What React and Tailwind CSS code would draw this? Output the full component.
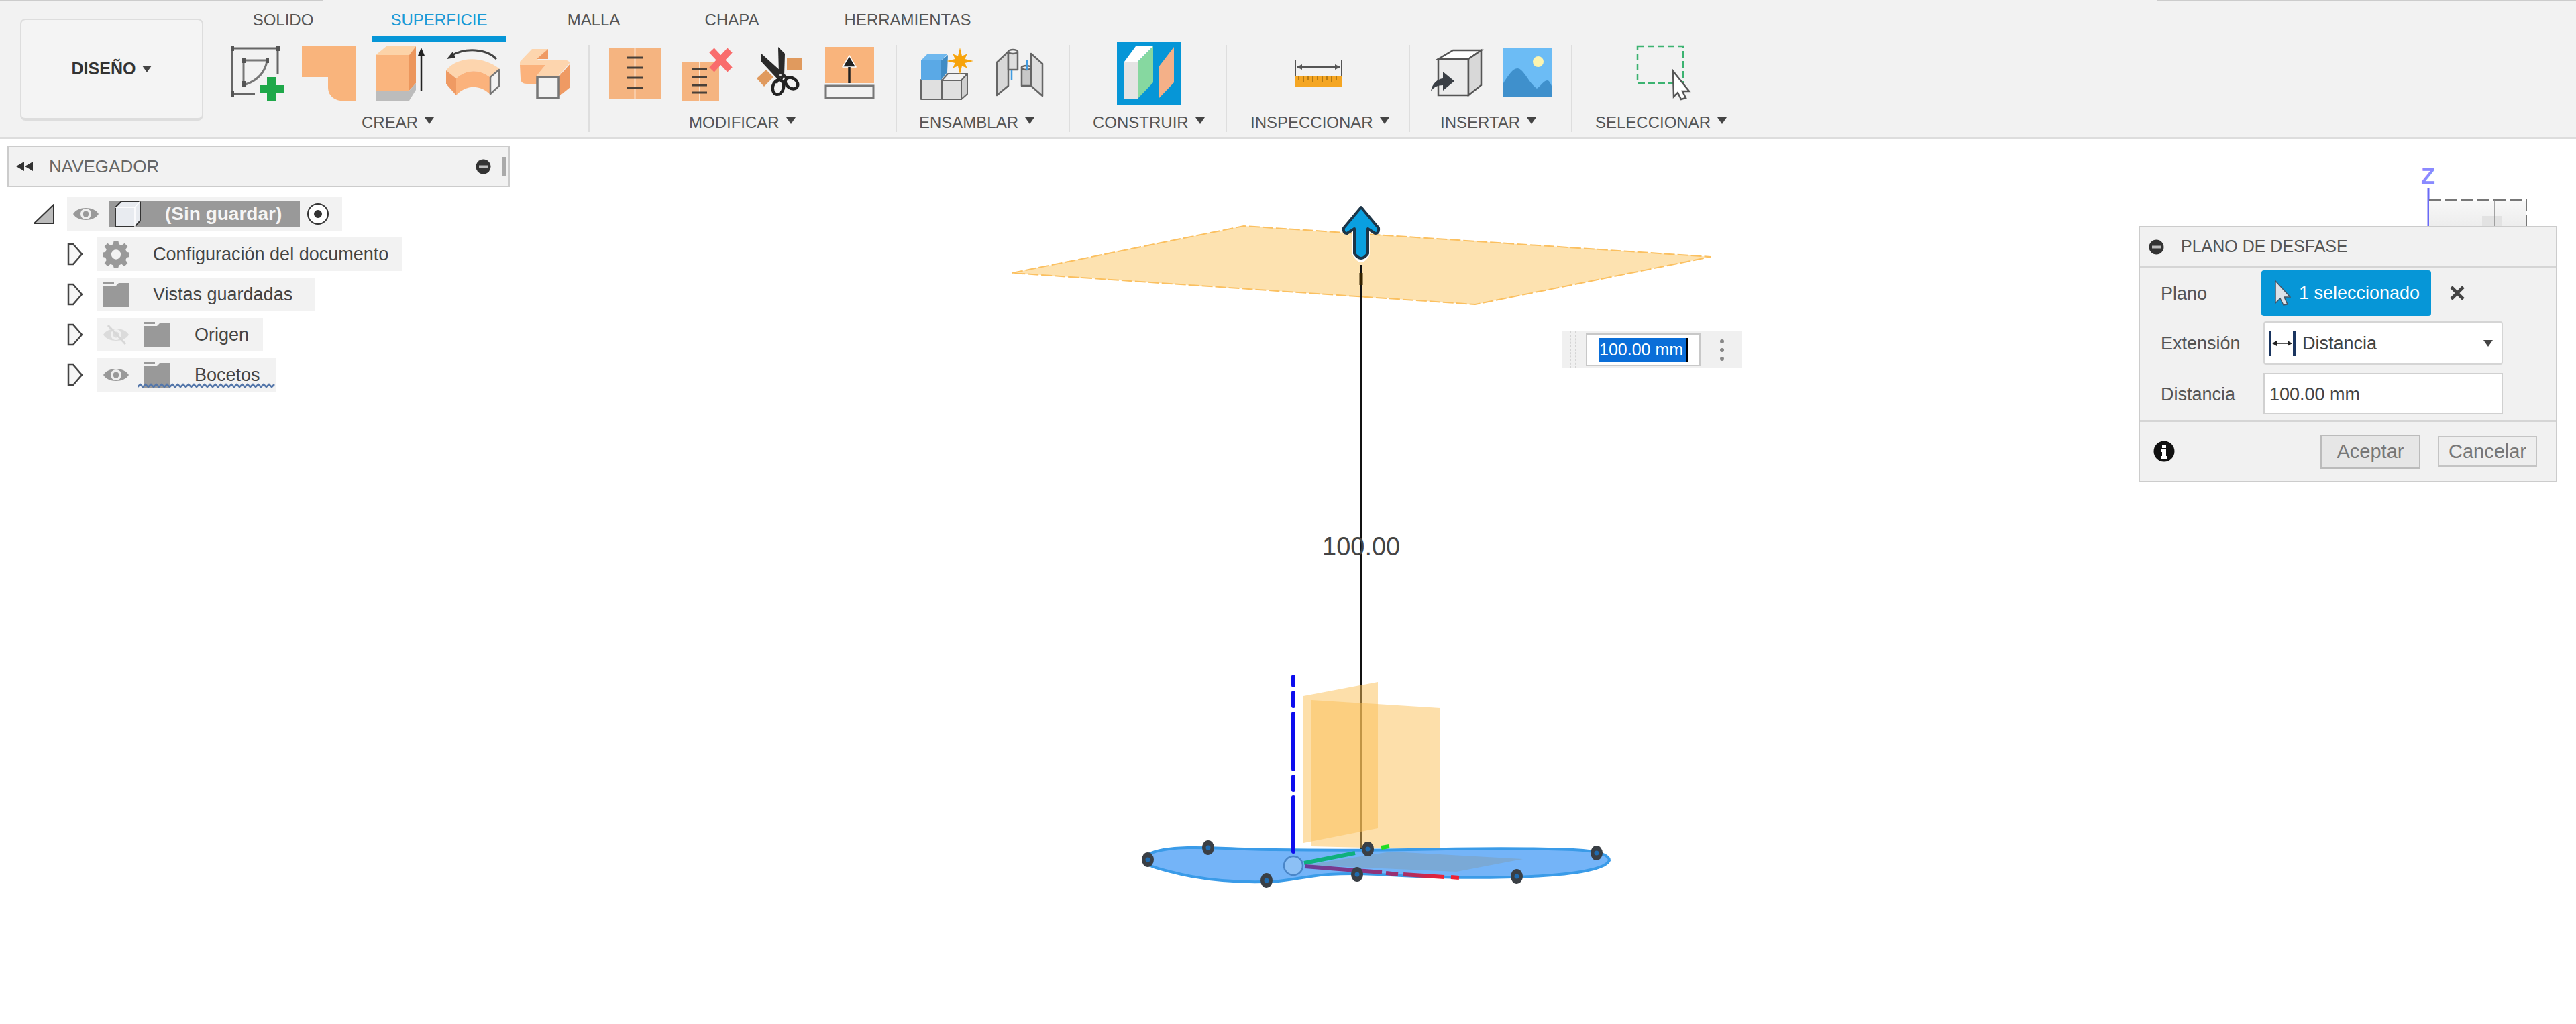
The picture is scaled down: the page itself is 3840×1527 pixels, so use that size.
import React from "react";

const Caret = ({ className = "" }) => (
  <svg width="14" height="10" viewBox="0 0 14 10" className={className}>
    <path d="M0 0H14L7 10Z" fill="#444" />
  </svg>
);

const Ico = ({ w, className = "", children }) => (
  <svg width={w} height="95" viewBox={`0 0 ${w} 95`} className={`shrink-0 overflow-visible ${className}`}>
    {children}
  </svg>
);

const SketchIcon = ({ className }) => (
  <Ico w={79} className={className}>
    <g stroke="#666" strokeWidth="3" fill="none">
      <path d="M2 10H70M2 10V78M2 78H36M70 10V48" />
      <path d="M19 28H54M19 28V62M54 28C52 45 40 58 22 64" stroke="#777" />
    </g>
    <g fill="#555">
      <rect x="0" y="6" width="5" height="8" />
      <rect x="68" y="6" width="5" height="8" />
      <rect x="0" y="74" width="5" height="8" />
      <rect x="17" y="24" width="5" height="8" />
      <rect x="52" y="24" width="5" height="8" />
      <rect x="17" y="59" width="5" height="8" />
    </g>
    <path d="M54 53H68V65H79V77H68V88H54V77H44V65H54Z" fill="#1fa84a" />
  </Ico>
);

const PatchIcon = ({ className }) => (
  <Ico w={81} className={className}>
    <path d="M0 7H81V88H60C48 88 39 80 39 68V53H0Z" fill="#f9b47c" />
  </Ico>
);

const ExtrudeIcon = ({ className }) => (
  <Ico w={78} className={className}>
    <path d="M0 20L16 7H60L50 20Z" fill="#fcd3a8" />
    <rect x="0" y="20" width="50" height="53" fill="#fab57e" />
    <path d="M50 20L60 7V62L50 73Z" fill="#ec965c" />
    <path d="M0 73H50L60 62V72L50 88H0Z" fill="#bcbcbc" />
    <path d="M68 74V18" stroke="#222" strokeWidth="2.5" />
    <path d="M68 9L73 21H63Z" fill="#222" />
  </Ico>
);

const RevolveIcon = ({ className }) => (
  <Ico w={83} className={className}>
    <path d="M77 26C62 10 30 9 10 21" stroke="#444" strokeWidth="3" fill="none" />
    <path d="M3 26L12 15L16 24Z" fill="#333" />
    <path d="M2 43C18 22 56 20 82 41L67 53C52 41 32 41 17 55Z" fill="#fdd5ae" />
    <path d="M17 55C32 41 52 41 67 53V78C52 64 32 64 17 80Z" fill="#fbb27c" />
    <path d="M2 43L17 55V80L2 63Z" fill="#ef9a63" />
    <path d="M68 53L81 42V66L68 78Z" fill="#f2f2f2" stroke="#777" strokeWidth="2.5" strokeLinejoin="round" />
  </Ico>
);

const SweepIcon = ({ className }) => (
  <Ico w={75} className={className}>
    <path d="M0 30L18 11H42L25 28H70L75 31L58 51H25L38 35H0Z" fill="#fdd5ae" />
    <path d="M42 11V26H25Z" fill="#ef9a63" />
    <path d="M0 35H38L25 51V63H10C4 63 1 60 1 55Z" fill="#fbb27c" />
    <path d="M59 51L75 33V68L59 81Z" fill="#ef9a63" />
    <rect x="26" y="53" width="32" height="31" fill="#f2f2f2" stroke="#777" strokeWidth="3.5" />
  </Ico>
);

const SplitIcon = ({ className }) => (
  <Ico w={77} className={className}>
    <rect x="0" y="10" width="77" height="75" fill="#f5b480" />
    <path d="M38.5 10V85" stroke="#fce3cc" strokeWidth="2" />
    <path d="M27 24H50M27 39H50M27 54H50M27 69H50" stroke="#4a4038" strokeWidth="3" />
  </Ico>
);

const DeleteIcon = ({ className }) => (
  <Ico w={77} className={className}>
    <rect x="0" y="30" width="56" height="58" fill="#f5b480" />
    <path d="M27 30V88" stroke="#fce3cc" strokeWidth="2" />
    <path d="M16 41H38M16 53H38M16 65H38M16 76H38" stroke="#4a4038" strokeWidth="3" />
    <path d="M45 13L72 42M72 13L45 42" stroke="#f96c6c" strokeWidth="10" />
  </Ico>
);

const TrimIcon = ({ className }) => (
  <Ico w={85} className={className}>
    <rect x="62" y="25" width="22" height="17" fill="#e09a5e" />
    <path d="M17 55L31 42L42 53L28 67Z" fill="#e09a5e" />
    <path d="M24 18L53 44L50 58L24 30Z" fill="#2a2a2a" />
    <path d="M49 8L59 18L58 51L54 60L50 48Z" fill="#2a2a2a" />
    <path d="M51 53L46 62M57 50L64 56" stroke="#2a2a2a" strokeWidth="4" />
    <ellipse cx="49" cy="68" rx="8" ry="11" transform="rotate(15 49 68)" fill="none" stroke="#222" strokeWidth="4.5" />
    <ellipse cx="69" cy="62" rx="10" ry="7.5" transform="rotate(35 69 62)" fill="none" stroke="#222" strokeWidth="4.5" />
    <circle cx="52" cy="50" r="2" fill="#ddd" />
  </Ico>
);

const OffsetIcon = ({ className }) => (
  <Ico w={73} className={className}>
    <rect x="0" y="8" width="73" height="54" fill="#f9b47c" />
    <rect x="1" y="66" width="71" height="18" fill="#f2f2f2" stroke="#777" strokeWidth="3" />
    <path d="M36 21L46 38H26Z" fill="#222" stroke="#fff" strokeWidth="1.5" strokeLinejoin="round" />
    <path d="M36 38V62" stroke="#222" strokeWidth="3.5" />
  </Ico>
);

const AssembleIcon = ({ className }) => (
  <Ico w={79} className={className}>
    <g stroke="#666" strokeWidth="2" strokeLinejoin="round">
      <path d="M1 57H31V86H1Z" fill="#e0e0e0" />
      <path d="M32 58L41 48H70L61 58Z" fill="#f2f2f2" />
      <path d="M32 58H61V86H32Z" fill="#e0e0e0" />
      <path d="M61 58L70 48V78L61 86Z" fill="#d0d0d0" />
    </g>
    <path d="M1 28H31V57H1Z" fill="#5aa9e6" />
    <path d="M1 28L11 18H41L31 28Z" fill="#6fb8ee" />
    <path d="M31 28L41 20L40 46L31 57Z" fill="#3f8cc5" />
    <path
      d="M59 9L62 21.6L69.6 18.4L66.4 25.9L79 29L66.4 32.1L69.6 39.6L62 36.4L59 49L56 36.4L48.4 39.6L51.6 32.1L39 29L51.6 25.9L48.4 18.4L56 21.6Z"
      fill="#f7a30a"
    />
  </Ico>
);

const JointIcon = ({ className }) => (
  <Ico w={70} className={className}>
    <g stroke="#666" strokeWidth="2.5" strokeLinejoin="round">
      <path d="M1 31L18 15V66L1 80Z" fill="#d8d8d8" />
      <path d="M18 15H32V42H18Z" fill="#dedede" />
      <ellipse cx="25" cy="15" rx="7" ry="3" fill="#f4f4f4" />
      <path d="M52 18L69 33V81L52 66Z" fill="#dedede" />
      <path d="M38 38L46 38H52V66H38Z" fill="#c8c8c8" />
      <ellipse cx="45" cy="39" rx="7" ry="3" fill="#f0f0f0" />
    </g>
    <path d="M23 43V57M46 28V42" stroke="#3f9ae0" strokeWidth="2.5" />
  </Ico>
);

const ConstructIcon = ({ className }) => (
  <Ico w={95} className={className}>
    <rect width="95" height="95" fill="#0696d7" />
    <path d="M11 30L28 7H54L31 30Z" fill="#fff" />
    <rect x="11" y="30" width="20" height="55" fill="#e4e4e4" />
    <path d="M31 30L54 7V61L31 85Z" fill="#86d8a0" />
    <path d="M62 38L85 8V61L62 85Z" fill="#f4b088" />
  </Ico>
);

const MeasureIcon = ({ className }) => (
  <Ico w={71} className={className}>
    <path d="M1 27V52M70 27V52M3 38H68" stroke="#555" strokeWidth="2" />
    <path d="M3 38L11 34V42ZM68 38L60 34V42Z" fill="#555" />
    <rect x="0" y="52" width="71" height="16" fill="#f5a623" />
    <path d="M6 52V57M13 52V60M20 52V57M27 52V60M34 52V57M41 52V60M48 52V57M55 52V60M62 52V57" stroke="#a06c10" strokeWidth="1.5" />
  </Ico>
);

const InsertIcon = ({ className }) => (
  <Ico w={75} className={className}>
    <path d="M11 26L33 13H75L56 26Z" fill="#fff" stroke="#555" strokeWidth="2.5" />
    <path d="M11 26H56V80H11Z" fill="#ececec" stroke="#555" strokeWidth="2.5" />
    <path d="M56 26L75 13V65L56 80Z" fill="#d8d8d8" stroke="#555" strokeWidth="2.5" />
    <path d="M0 74C2 62 10 56 18 55V45L35 59L18 73V65C10 65 4 68 0 74Z" fill="#3a3f45" />
  </Ico>
);

const ImageIcon = ({ className }) => (
  <Ico w={72} className={className}>
    <rect x="0" y="10" width="72" height="73" fill="#6cbcf5" />
    <ellipse cx="52" cy="30" rx="8" ry="8" fill="#fdf5b0" />
    <path d="M0 62C8 50 14 40 21 40C30 40 38 62 50 70C56 66 60 58 66 58C68 58 70 62 72 66V83H0Z" fill="#3f90cc" />
  </Ico>
);

const SelectIcon = ({ className }) => (
  <Ico w={79} className={className}>
    <rect x="1" y="7" width="68" height="55" fill="none" stroke="#3cb371" strokeWidth="2.5" strokeDasharray="10 5" />
    <path d="M54 44L78 74L68 74L73 84L66 86L61 76L55 82Z" fill="#fff" stroke="#555" strokeWidth="2.5" />
  </Ico>
);

function Group({ width, pad, label, labelPad, children }) {
  return (
    <div className={`shrink-0 flex flex-col ${width}`}>
      <div className={`flex items-start h-[95px] ${pad}`}>{children}</div>
      <div className={`flex items-center gap-[10px] h-[28px] mt-[12px] text-[24px] text-[#555] whitespace-nowrap ${labelPad}`}>
        {label}
        <Caret className="-mt-[6px]" />
      </div>
    </div>
  );
}

const Sep = () => <div className="shrink-0 w-[2px] h-[130px] mt-[5px] bg-[#dedede]" />;

function Toolbar() {
  return (
    <div className="relative z-10 flex flex-col h-[207px] bg-[#f2f2f2] border-b-2 border-[#dddddd]">
      <div className="flex justify-between h-[2px]">
        <div className="w-[481px] bg-[#cccccc]" />
        <div className="w-[625px] bg-[#cccccc]" />
      </div>
      <div className="flex">
        <div className="shrink-0 flex items-center justify-center gap-[10px] w-[273px] h-[152px] ml-[30px] mt-[26px] rounded-lg border-2 border-b-4 border-[#dddddd] bg-[#f4f4f4] text-[25px] font-bold text-[#333]">
          DISEÑO <Caret />
        </div>
        <div className="flex flex-col">
          <div className="flex h-[60px] text-[24px] text-[#555]">
            <div className="w-[238px] pt-[3px] pb-[8px] flex items-center justify-center">SOLIDO</div>
            <div className="w-[201px] ml-[13px] pt-[3px] border-b-[8px] border-[#0696d7] flex items-center justify-center text-[#1b9ad6]">SUPERFICIE</div>
            <div className="w-[260px] pt-[3px] pb-[8px] flex items-center justify-center">MALLA</div>
            <div className="w-[152px] pt-[3px] pb-[8px] flex items-center justify-center">CHAPA</div>
            <div className="w-[372px] pt-[3px] pb-[8px] flex items-center justify-center">HERRAMIENTAS</div>
          </div>
          <div className="flex">
            <Group width="w-[574px]" pad="pl-[41px]" label="CREAR" labelPad="pl-[236px]">
              <SketchIcon />
              <PatchIcon className="ml-[27px]" />
              <ExtrudeIcon className="ml-[29px]" />
              <RevolveIcon className="ml-[25px]" />
              <SweepIcon className="ml-[29px]" />
            </Group>
            <Sep />
            <Group width="w-[456px]" pad="pl-[29px]" label="MODIFICAR" labelPad="pl-[148px]">
              <SplitIcon />
              <DeleteIcon className="ml-[31px]" />
              <TrimIcon className="ml-[18px]" />
              <OffsetIcon className="ml-[34px]" />
            </Group>
            <Sep />
            <Group width="w-[256px]" pad="pl-[35px]" label="ENSAMBLAR" labelPad="pl-[33px]">
              <AssembleIcon />
              <JointIcon className="ml-[34px]" />
            </Group>
            <Sep />
            <Group width="w-[232px]" pad="pl-[70px]" label="CONSTRUIR" labelPad="pl-[34px]">
              <ConstructIcon />
            </Group>
            <Sep />
            <Group width="w-[271px]" pad="pl-[101px]" label="INSPECCIONAR" labelPad="pl-[35px]">
              <MeasureIcon />
            </Group>
            <Sep />
            <Group width="w-[240px]" pad="pl-[31px]" label="INSERTAR" labelPad="pl-[45px]">
              <InsertIcon />
              <ImageIcon className="ml-[33px]" />
            </Group>
            <Sep />
            <Group width="w-[256px]" pad="pl-[96px]" label="SELECCIONAR" labelPad="pl-[34px]">
              <SelectIcon />
            </Group>
          </div>
        </div>
      </div>
    </div>
  );
}

const MinusDot = ({ className = "" }) => (
  <svg width="23" height="23" viewBox="0 0 23 23" className={`shrink-0 ${className}`}>
    <circle cx="11.5" cy="11.5" r="11" fill="#333" />
    <rect x="5" y="9.5" width="13" height="4" fill="#bbb" />
  </svg>
);

const Expand = () => (
  <svg width="24" height="34" viewBox="0 0 24 34" className="shrink-0">
    <path d="M2 2H9L22 17L9 32H2Z" fill="#f6f6f6" stroke="#444" strokeWidth="2.5" />
  </svg>
);

const Eye = ({ off }) => (
  <svg width="40" height="30" viewBox="0 0 40 30" className="shrink-0">
    <g opacity={off ? 0.25 : 1}>
      <path d="M1 15C8 3 32 3 39 15C32 27 8 27 1 15Z" fill="#999" />
      <circle cx="20" cy="15" r="8" fill="#eee" />
      <circle cx="20" cy="15" r="4.5" fill="#999" />
      {off && <path d="M8 1L34 29" stroke="#888" strokeWidth="3" />}
    </g>
  </svg>
);

const Folder = () => (
  <svg width="40" height="38" viewBox="0 0 40 38" className="shrink-0">
    <path d="M0 0H17V3H0ZM0 6H20L24 2H40V38H0Z" fill="#999" />
  </svg>
);

const Gear = () => (
  <svg width="40" height="40" viewBox="0 0 24 24" className="shrink-0">
    <path
      fillRule="evenodd"
      fill="#999"
      d="M10 0H14L14.6 3.2L16.9 4.2L19.6 2.3L22.4 5.1L20.5 7.8L21.5 10.1L24 10.6V14.4L21.5 15L20.5 17.3L22.4 20L19.6 22.8L16.9 20.9L14.6 21.9L14 24H10L9.4 21.9L7.1 20.9L4.4 22.8L1.6 20L3.5 17.3L2.5 15L0 14.4V10.6L2.5 10.1L3.5 7.8L1.6 5.1L4.4 2.3L7.1 4.2L9.4 3.2ZM12 8A4.3 4.3 0 1 0 12 16.6A4.3 4.3 0 1 0 12 8Z"
    />
  </svg>
);

function TreeRow({ width, children, wavy }) {
  return (
    <div className="flex items-center gap-[21px] ml-[49px]">
      <Expand />
      <div className={`relative flex items-center h-[50px] px-[8px] bg-[#f2f2f2] ${width}`}>
        {children}
        {wavy && (
          <svg width="206" height="8" viewBox="0 0 206 8" className="absolute left-[60px] top-[37px]">
            <path d="M0 6L4 2L8 6L12 2L16 6L20 2L24 6L28 2L32 6L36 2L40 6L44 2L48 6L52 2L56 6L60 2L64 6L68 2L72 6L76 2L80 6L84 2L88 6L92 2L96 6L100 2L104 6L108 2L112 6L116 2L120 6L124 2L128 6L132 2L136 6L140 2L144 6L148 2L152 6L156 2L160 6L164 2L168 6L172 2L176 6L180 2L184 6L188 2L192 6L196 2L200 6L204 2" fill="none" stroke="#5577aa" strokeWidth="2.5" />
          </svg>
        )}
      </div>
    </div>
  );
}

function Navigator() {
  return (
    <div className="absolute z-10 left-[11px] top-[217px] w-[749px]">
      <div className="flex items-center h-[62px] pl-[11px] bg-[#f2f2f2] border-2 border-[#cccccc]">
        <svg width="26" height="14" viewBox="0 0 26 14" className="shrink-0">
          <path d="M0 7L12 0V14ZM13 7L25 0V14Z" fill="#333" />
        </svg>
        <span className="ml-[23px] text-[26px] text-[#666]">NAVEGADOR</span>
        <MinusDot className="ml-auto" />
        <div className="ml-[17px] mr-[4px] w-[5px] h-[28px] border-x-2 border-[#aaaaaa]" />
      </div>
      <div className="flex flex-col gap-[10px] mt-[15px] ml-[40px] text-[27px] text-[#444]">
        <div className="flex items-center gap-[19px] h-[50px]">
          <svg width="30" height="30" viewBox="0 0 30 30" className="shrink-0">
            <path d="M0 29L29 1V29Z" fill="#bbb" stroke="#333" strokeWidth="2" />
          </svg>
          <div className="flex items-center w-[410px] h-[50px] pl-[8px] bg-[#f2f2f2]">
            <Eye />
            <div className="flex items-center ml-[14px] w-[285px] h-[40px] bg-[#999999] pl-[9px]">
              <svg width="40" height="40" viewBox="0 0 40 40" className="shrink-0">
                <path d="M1 10L10 1H38V30L30 39H1Z" fill="#e8ebf0" stroke="#333" strokeWidth="2" />
                <path d="M1 10H30V39M30 10L38 1" fill="none" stroke="#fff" strokeWidth="1.5" />
              </svg>
              <span className="ml-[35px] font-bold text-[#f5f5f5] text-[28px] whitespace-nowrap">(Sin guardar)</span>
            </div>
            <svg width="34" height="34" viewBox="0 0 34 34" className="ml-[10px] shrink-0">
              <circle cx="17" cy="17" r="15" fill="#fff" stroke="#333" strokeWidth="2" />
              <circle cx="17" cy="17" r="6" fill="#333" />
            </svg>
          </div>
        </div>
        <TreeRow width="w-[455px]">
          <Gear />
          <span className="ml-[35px] whitespace-nowrap">Configuración del documento</span>
        </TreeRow>
        <TreeRow width="w-[324px]">
          <Folder />
          <span className="ml-[35px] whitespace-nowrap">Vistas guardadas</span>
        </TreeRow>
        <TreeRow width="w-[247px]">
          <Eye off />
          <div className="ml-[21px]">
            <Folder />
          </div>
          <span className="ml-[36px]">Origen</span>
        </TreeRow>
        <TreeRow width="w-[267px]" wavy>
          <Eye />
          <div className="ml-[21px]">
            <Folder />
          </div>
          <span className="ml-[36px]">Bocetos</span>
        </TreeRow>
      </div>
    </div>
  );
}

function OffsetPanel() {
  const label = "w-[181px] shrink-0 pl-[31px] pt-[2px]";
  return (
    <div className="absolute z-10 left-[3188px] top-[337px] w-[624px] h-[382px] flex flex-col bg-[#f1f1f1] border-2 border-[#cccccc] text-[27px] text-[#555]">
      <div className="flex items-center h-[60px] shrink-0 pl-[13px] border-b-2 border-[#d5d5d5] text-[25px]">
        <MinusDot />
        <span className="ml-[25px]">PLANO DE DESFASE</span>
      </div>
      <div className="flex flex-col pt-[4px] h-[230px] shrink-0 border-b-2 border-[#d5d5d5]">
        <div className="flex items-center h-[68px]">
          <span className={label}>Plano</span>
          <div className="flex items-center w-[253px] h-[68px] rounded-sm bg-[#0696d7] pl-[20px] text-white">
            <svg width="24" height="38" viewBox="0 0 24 38" className="shrink-0">
              <path d="M1 1L23 25H14L19 36L13 37L8 27L1 34Z" fill="#dde2e8" stroke="#445566" strokeWidth="1.5" />
            </svg>
            <span className="ml-[12px] whitespace-nowrap">1 seleccionado</span>
          </div>
          <svg width="22" height="22" viewBox="0 0 22 22" className="ml-[28px]">
            <path d="M2 2L20 20M20 2L2 20" stroke="#444" strokeWidth="5" />
          </svg>
        </div>
        <div className="flex items-center h-[65px] mt-[8px]">
          <span className={`${label} mr-[3px]`}>Extensión</span>
          <div className="flex items-center w-[357px] h-[65px] pl-[6px] pr-[13px] bg-white border-2 border-[#d5d5d5] rounded-sm text-[#444]">
            <svg width="40" height="38" viewBox="0 0 40 38" className="shrink-0">
              <path d="M2 0V38M38 0V38" stroke="#1a3560" strokeWidth="4" />
              <path d="M6 19H34" stroke="#222" strokeWidth="1.5" />
              <path d="M5 19L12 15V23ZM35 19L28 15V23Z" fill="#222" />
            </svg>
            <span className="ml-[10px] pt-[2px]">Distancia</span>
            <Caret className="ml-auto" />
          </div>
        </div>
        <div className="flex items-center h-[62px] mt-[12px]">
          <span className={`${label} mr-[3px]`}>Distancia</span>
          <div className="flex items-center w-[357px] h-[62px] pl-[7px] pt-[2px] bg-white border-2 border-[#d0d0d0] text-[#444]">100.00 mm</div>
        </div>
      </div>
      <div className="flex items-center flex-1 pl-[20px]">
        <svg width="32" height="32" viewBox="0 0 32 32" className="shrink-0">
          <circle cx="16" cy="16" r="15.5" fill="#111" />
          <rect x="13" y="6" width="6" height="5" fill="#fff" />
          <path d="M11 13H19V23H21V27H11V23H13V17H11Z" fill="#fff" />
        </svg>
        <div className="flex items-center justify-center ml-[217px] w-[149px] h-[51px] pt-[2px] bg-[#e6e6e6] border-2 border-[#bbbbbb] text-[#777] text-[29px]">Aceptar</div>
        <div className="flex items-center justify-center ml-[26px] w-[148px] h-[46px] pt-[2px] bg-[#eeeeee] border-2 border-[#c4c4c4] text-[#777] text-[29px]">Cancelar</div>
      </div>
    </div>
  );
}

function DimensionInput() {
  return (
    <div className="absolute z-10 left-[2329px] top-[494px] w-[268px] h-[55px] flex items-center bg-[#f0f0f0] text-[25px]">
      <div className="ml-[12px] w-[8px] h-full border-x border-dashed border-[#d4d4d4]" />
      <div className="ml-[15px] w-[171px] h-[49px] bg-white border-2 border-[#c8c8c8] flex items-center pl-[18px]">
        <span className="flex items-center h-[36px] w-[132px] bg-[#0a6ed8] text-white border-r-2 border-black whitespace-nowrap overflow-hidden">100.00 mm</span>
      </div>
      <div className="ml-[29px] flex flex-col gap-[7px]">
        <div className="w-[6px] h-[6px] rounded-full bg-[#888]" />
        <div className="w-[6px] h-[6px] rounded-full bg-[#888]" />
        <div className="w-[6px] h-[6px] rounded-full bg-[#888]" />
      </div>
    </div>
  );
}

function Scene() {
  const points = [
    [1711, 1282],
    [1801, 1264],
    [1888, 1313],
    [2023, 1304],
    [2039, 1266],
    [2261, 1307],
    [2380, 1272],
  ];
  return (
    <svg width="3840" height="1527" viewBox="0 0 3840 1527" className="absolute left-0 top-0">
      <defs>
        <linearGradient id="axis" x1="1945" x2="2175" y1="0" y2="0" gradientUnits="userSpaceOnUse">
          <stop offset="0" stopColor="#6a3d9a" />
          <stop offset="0.6" stopColor="#9a3070" />
          <stop offset="0.9" stopColor="#ee2233" />
        </linearGradient>
        <linearGradient id="cube" x1="0" x2="0" y1="298" y2="340" gradientUnits="userSpaceOnUse">
          <stop offset="0" stopColor="#f8f8f8" />
          <stop offset="1" stopColor="#ececec" />
        </linearGradient>
      </defs>

      <path d="M1509 407L1854 337L2550 383L2199 454Z" fill="#fde2b0" stroke="#fbc060" strokeWidth="2" strokeDasharray="16 4" />
      <path d="M2029 395V1287" stroke="#111" strokeWidth="2.5" />
      <path d="M2029 407V425" stroke="#332200" strokeWidth="5" />
      <path d="M2029 302L2060 342L2042 346V380Q2029 402 2016 380V346L1998 342Z" fill="#fff" />
      <path d="M2029 309L2055 340Q2056 348 2050 348L2039 341V378Q2029 392 2019 378V341L2008 348Q2002 348 2003 340Z" fill="#0aa0e0" stroke="#1d3547" strokeWidth="4" strokeLinejoin="round" />

      <path d="M1943 1038L2054 1017V1235L1943 1257Z" fill="#fbbf55" fillOpacity="0.5" />
      <path d="M1955 1044L2147 1056V1267L1955 1262Z" fill="#fbbf55" fillOpacity="0.5" />

      <path
        d="M1704 1282C1708 1272 1730 1265 1770 1264C1810 1263 1850 1267 1900 1267C1960 1268 2040 1268 2100 1267C2180 1265 2300 1264 2360 1268C2385 1270 2399 1276 2399 1283C2395 1293 2365 1302 2300 1306C2230 1310 2150 1309 2090 1306C2050 1303 2020 1302 1980 1304C1940 1307 1915 1316 1885 1315C1840 1316 1790 1312 1745 1300C1725 1295 1706 1290 1704 1282Z"
        fill="#74b4f8"
        stroke="#3a9be8"
        strokeWidth="4"
      />
      <path d="M1946 1290L2074 1270L2270 1281L2171 1300Z" fill="#7aa9d6" />
      <path d="M1928 1009V1022M1928 1033V1053M1928 1064V1147M1928 1158V1178M1928 1189V1270" stroke="#0d0dee" strokeWidth="6" strokeLinecap="round" />
      <path d="M1944 1287L2020 1272" stroke="#0fb07e" strokeWidth="6" />
      <path d="M2059 1264L2071 1262" stroke="#22dd22" strokeWidth="6" />
      <path d="M1945 1292L2060 1301M2066 1302L2084 1304M2092 1304L2153 1308M2163 1308L2175 1309" stroke="url(#axis)" strokeWidth="6" />
      <circle cx="1928" cy="1291" r="14" fill="#8cc0f5" stroke="#4a86c8" strokeWidth="2.5" />
      {points.map(([cx, cy]) => (
        <g key={cx}>
          <ellipse cx={cx} cy={cy} rx="9" ry="11" fill="#3a3f45" />
          <circle cx={cx} cy={cy} r="3.5" fill="#1f6bb0" />
        </g>
      ))}

      <path d="M3620 280V340" stroke="#6a6af5" strokeWidth="3" />
      <rect x="3621" y="299" width="145" height="40" fill="url(#cube)" />
      <rect x="3700" y="322" width="30" height="16" fill="#e2e2e2" />
      <path d="M3621 298H3766V340" fill="none" stroke="#777" strokeWidth="2" strokeDasharray="18 6" />
      <path d="M3719 298V340" stroke="#888" strokeWidth="1.5" />
    </svg>
  );
}

export default function App() {
  return (
    <div className="relative w-[3840px] h-[1527px] overflow-hidden bg-white font-['Liberation_Sans',Arial,sans-serif]">
      <Scene />
      <Toolbar />
      <Navigator />
      <DimensionInput />
      <div className="absolute left-[1971px] top-[793px] text-[38px] leading-[44px] text-[#444]">100.00</div>
      <div className="absolute left-[3609px] top-[245px] text-[34px] leading-[34px] font-bold text-[#8a8aff]">Z</div>
      <OffsetPanel />
    </div>
  );
}
